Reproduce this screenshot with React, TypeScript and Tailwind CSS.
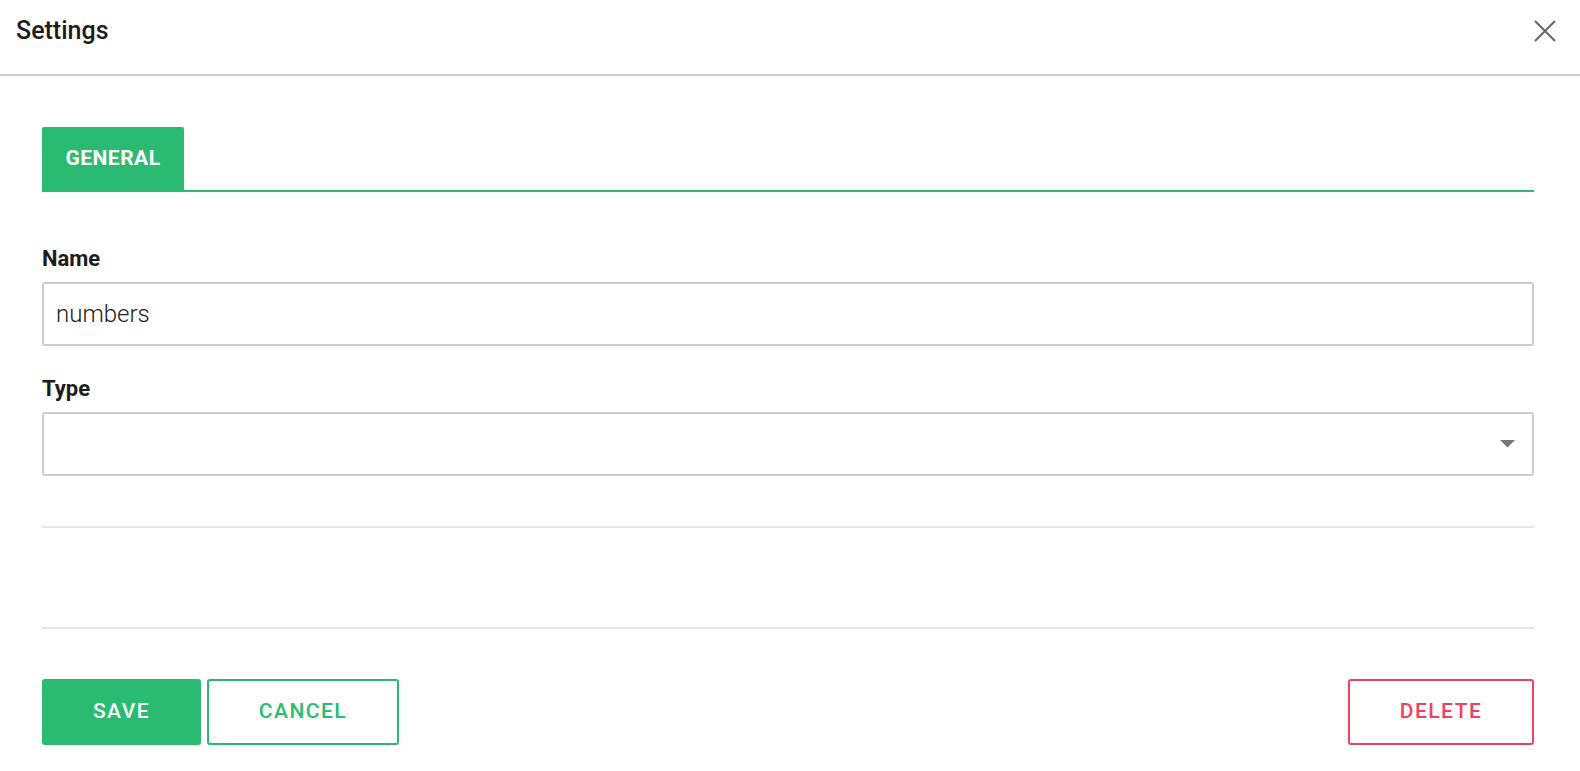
export default function App() {
  return (
    <div className="min-h-screen bg-white font-['Roboto',sans-serif] text-[#1c1c1c]">
      {/* header */}
      <div className="flex h-[76px] items-start justify-between border-b-2 border-[#cfcfcf] pl-4 pr-6">
        <h1 className="mt-[16px] text-[25px] font-medium leading-[30px]">Settings</h1>
        <button className="mt-[20px] text-[#666]">
          <svg width="22" height="22" viewBox="0 0 22 22" fill="none" stroke="currentColor" strokeWidth="2">
            <path d="M1 1L21 21M21 1L1 21" />
          </svg>
        </button>
      </div>

      <div className="pl-[42px] pr-[46px] pt-[51px]">
        {/* tabs */}
        <div className="flex border-b-2 border-[#2bba72]">
          <div className="flex h-[63px] w-[142px] items-center justify-center rounded-t-[2px] bg-[#2bba72] text-[21px] font-bold tracking-[0.5px] text-white">
            GENERAL
          </div>
        </div>

        {/* form */}
        <div className="pt-[54px]">
          <label className="block text-[22px] font-bold leading-[26px]">Name</label>
          <div className="mt-[10px] flex h-[64px] items-center rounded-[3px] border-2 border-[#cdcdcd] px-[12px] text-[24px] font-light text-[#222]">
            numbers
          </div>

          <label className="mt-[30px] block text-[22px] font-bold leading-[26px]">Type</label>
          <div className="mt-[10px] flex h-[64px] items-center justify-end rounded-[3px] border-2 border-[#cdcdcd] pr-[17px]">
            <svg width="15" height="8" viewBox="0 0 15 8">
              <path d="M0 0H15L7.5 7.5Z" fill="#777" />
            </svg>
          </div>
        </div>

        <div className="mt-[50px] border-t-2 border-[#e6e6e6]" />
        <div className="mt-[99px] border-t-2 border-[#e6e6e6]" />

        {/* actions */}
        <div className="mt-[50px] flex items-center justify-between">
          <div className="flex gap-[6px]">
            <button className="h-[66px] w-[159px] rounded-[3px] bg-[#2bba72] text-[21px] font-medium tracking-[1.5px] text-white">
              SAVE
            </button>
            <button className="h-[66px] w-[192px] rounded-[3px] border-2 border-[#2bba72] text-[21px] font-medium tracking-[1.5px] text-[#2bba72]">
              CANCEL
            </button>
          </div>
          <button className="h-[66px] w-[186px] rounded-[3px] border-2 border-[#f2405f] text-[21px] font-medium tracking-[1.5px] text-[#f2405f]">
            DELETE
          </button>
        </div>
      </div>
    </div>
  );
}
